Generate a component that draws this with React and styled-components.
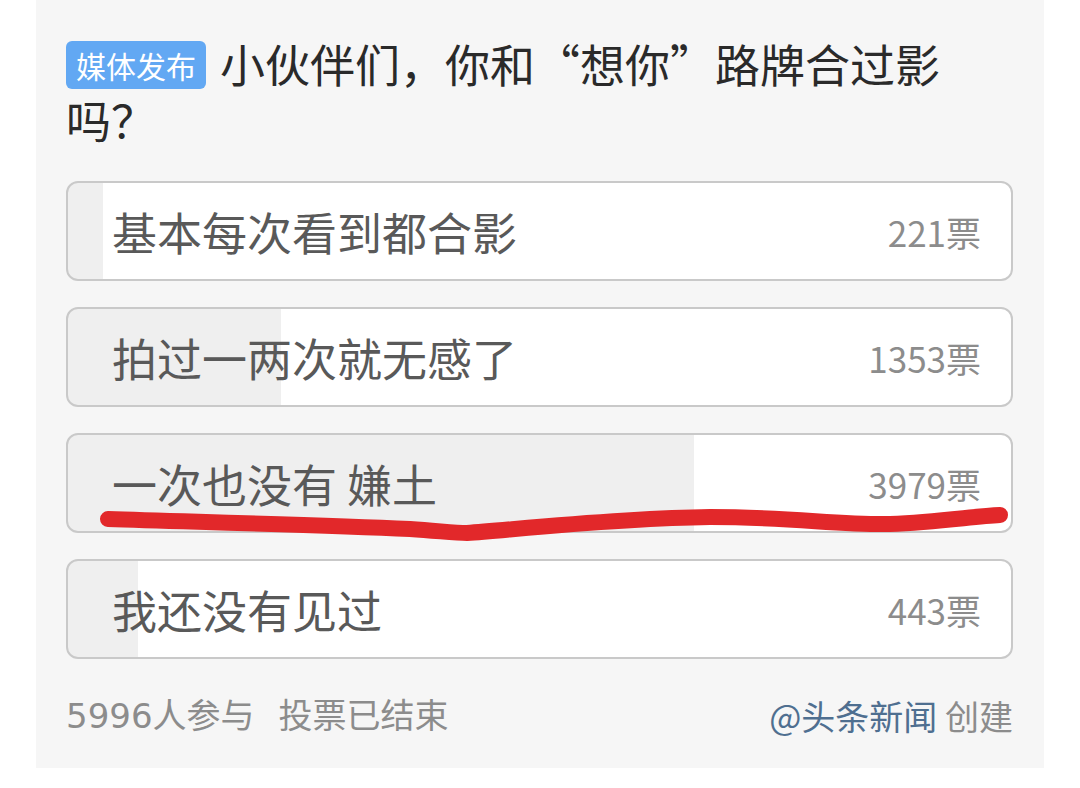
import styled, { createGlobalStyle } from 'styled-components';

const GlobalStyle = createGlobalStyle`
  body {
    margin: 0;
    background: #ffffff;
    font-family: 'Noto Sans CJK SC', 'Noto Sans', sans-serif;
  }
`;

const Card = styled.div`
  position: relative;
  box-sizing: border-box;
  width: 1008px;
  height: 768px;
  margin-left: 36px;
  padding: 36px 31px 0 30px;
  background: #f6f6f6;
`;

const Title = styled.h1`
  margin: 0;
  font-size: 45px;
  font-weight: 400;
  line-height: 56px;
  color: #2a2a2a;
`;

const Badge = styled.span`
  display: inline-block;
  vertical-align: top;
  margin: 5px 14px 0 0;
  padding: 0 10px;
  height: 48px;
  line-height: 48px;
  font-size: 30px;
  color: #ffffff;
  background: #62a8f3;
  border-radius: 6px;
`;

const OptionList = styled.div`
  display: flex;
  flex-direction: column;
  gap: 26px;
  margin-top: 33px;
`;

const Option = styled.div`
  box-sizing: border-box;
  height: 100px;
  display: flex;
  align-items: center;
  justify-content: space-between;
  padding: 0 30px 0 44px;
  border: 2px solid #c9c9c9;
  border-radius: 12px;
  background: linear-gradient(
    to right,
    #efefef ${(props) => props.$pct}%,
    #ffffff ${(props) => props.$pct}%
  );
`;

const Label = styled.span`
  font-size: 45px;
  color: #595959;
  white-space: pre;
`;

const Count = styled.span`
  font-size: 35px;
  color: #8c8c8c;
`;

const Footer = styled.div`
  display: flex;
  justify-content: space-between;
  margin-top: 37px;
  font-size: 34px;
  line-height: 40px;
  color: #8c8c8c;
`;

const Stats = styled.span`
  font-family: 'DejaVu Sans', 'Noto Sans CJK SC', sans-serif;
`;

const Gap = styled.span`
  display: inline-block;
  width: ${(props) => props.$w}px;
`;

const Author = styled.span`
  color: #4f6f90;
`;

const Scribble = styled.svg`
  position: absolute;
  left: 0;
  top: 0;
  width: 1008px;
  height: 768px;
  pointer-events: none;
`;

const options = [
  { label: '基本每次看到都合影', votes: 221 },
  { label: '拍过一两次就无感了', votes: 1353 },
  { label: '一次也没有 嫌土', votes: 3979 },
  { label: '我还没有见过', votes: 443 },
];

const total = 5996;

export default function App() {
  return (
    <>
      <GlobalStyle />
      <Card lang="zh-CN">
        <Title>
          <Badge>媒体发布</Badge>
          小伙伴们，你和“想你”路牌合过影吗？
        </Title>
        <OptionList>
          {options.map((o) => (
            <Option key={o.label} $pct={((o.votes / total) * 100).toFixed(1)}>
              <Label>{o.label}</Label>
              <Count>{o.votes}票</Count>
            </Option>
          ))}
        </OptionList>
        <Footer>
          <Stats>
            {total}人参与<Gap $w={24} />投票已结束
          </Stats>
          <span>
            <Author>@头条新闻</Author> 创建
          </span>
        </Footer>
        <Scribble viewBox="36 0 1008 768">
          <path
            d="M108 519 C 200 522, 320 525, 410 529 C 440 531, 455 533, 467 533 C 520 529, 620 518, 710 517 C 790 517, 840 525, 890 524 C 940 522, 975 516, 1000 515"
            fill="none"
            stroke="#e2282a"
            strokeWidth="16"
            strokeLinecap="round"
            strokeLinejoin="round"
          />
        </Scribble>
      </Card>
    </>
  );
}
